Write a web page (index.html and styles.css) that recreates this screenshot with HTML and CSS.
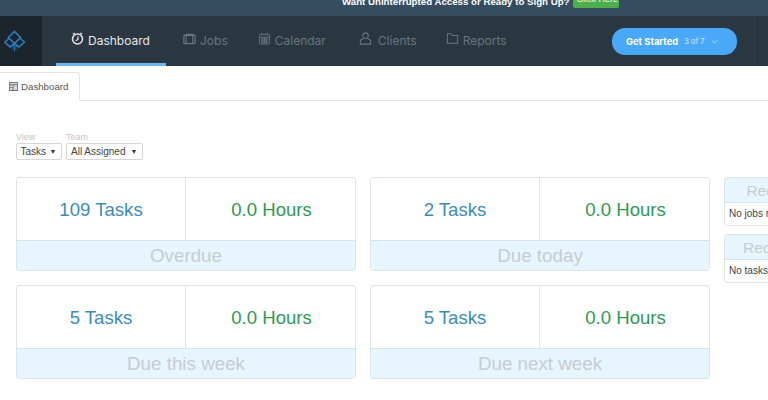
FILE: index.html
```html
<!DOCTYPE html>
<html lang="en">
<head>
<meta charset="utf-8">
<title>Dashboard</title>
<link rel="stylesheet" href="styles.css">
</head>
<body>
<div class="promo">
  <span class="promo-text">Want Uninterrupted Access or Ready to Sign Up?</span>
  <a class="promo-btn">Click Here</a>
</div>
<header class="nav">
  <div class="logo">
    <svg width="22" height="24" viewBox="0 0 22 24" fill="none" stroke="#2e7cbc" stroke-width="1.6">
      <path d="M10.500 2.500 L16.500 8.500 L10.500 14.500 L4.500 8.500 Z"/>
      <path d="M5.500 9 L1 13 L6 18 L10.500 14.500 L15 18 L20.500 13 L15.500 9"/>
      <path d="M9 16.500v4M10.500 15.500v7M12 16.500v4" stroke-width=".8"/>
    </svg>
  </div>
  <nav class="menu">
    <a class="item active">
      <svg class="ico" viewBox="0 0 14 14" fill="none" stroke="currentColor" stroke-width="1.6"><circle cx="7" cy="7.500" r="5.400"/><path d="M4 1 L2 2.500M10 1l2 1.500M7.500 4.500V8L5 9.500" stroke-width="1.3"/></svg>
      Dashboard
    </a>
    <a class="item">
      <svg class="ico" viewBox="0 0 14 14" fill="none" stroke="currentColor" stroke-width="1.4"><rect x="1" y="3.500" width="12" height="9" rx="1"/><path d="M3.500 12.500V2.500h7v10" stroke-width="1.2"/></svg>
      Jobs
    </a>
    <a class="item">
      <svg class="ico" viewBox="0 0 14 14" fill="none" stroke="currentColor" stroke-width="1"><rect x="1.500" y="2.500" width="11" height="10.500" rx="1"/><path d="M4 .8v2.600M10 .8v2.600M1.500 5.500h11M3 7.500h8M3 9.500h8M3 11.500h8M5 6v6M7 6v6M9 6v6"/></svg>
      Calendar
    </a>
    <a class="item">
      <svg class="ico" viewBox="0 0 14 14" fill="none" stroke="currentColor" stroke-width="1.2"><circle cx="7" cy="4" r="3"/><path d="M5 7 L1.500 9v4h11V9L9 7"/></svg>
      Clients
    </a>
    <a class="item">
      <svg class="ico" viewBox="0 0 14 14" fill="none" stroke="currentColor" stroke-width="1.1"><path d="M1.500 2h4l1.500 1.800h5.500v8.200h-11zM7 3.800h5.500"/></svg>
      Reports
    </a>
  </nav>
  <a class="started">
    <b>Get Started</b><span class="count">3 of 7</span>
    <svg class="chev" viewBox="0 0 10 6" fill="none" stroke="#d5eafd" stroke-width="1"><path d="M1 1l4 4 4-4"/></svg>
  </a>
  <div class="nav-end"></div>
</header>
<div class="tabs">
  <div class="tab">
    <svg class="tab-ico" viewBox="0 0 10 10"><rect width="10" height="10" fill="#777"/><path d="M1 1h8v1.500H1zM1 3.500h3v2H1zM1 6.500h3V9H1zM5 3.500h4V9H5z" fill="#d8d8d8"/></svg>
    Dashboard
  </div>
</div>
<main class="content">
  <div class="filters">
    <div class="filter">
      <label>View</label>
      <div class="select sel-view">Tasks<i class="caret"></i></div>
    </div>
    <div class="filter">
      <label>Team</label>
      <div class="select sel-team">All Assigned<i class="caret"></i></div>
    </div>
  </div>
  <div class="board">
    <div class="grid">
      <section class="card">
        <div class="stats"><div class="stat tasks">109 Tasks</div><div class="stat hours">0.0 Hours</div></div>
        <div class="foot">Overdue</div>
      </section>
      <section class="card">
        <div class="stats"><div class="stat tasks">2 Tasks</div><div class="stat hours">0.0 Hours</div></div>
        <div class="foot">Due today</div>
      </section>
      <section class="card">
        <div class="stats"><div class="stat tasks">5 Tasks</div><div class="stat hours">0.0 Hours</div></div>
        <div class="foot">Due this week</div>
      </section>
      <section class="card">
        <div class="stats"><div class="stat tasks">5 Tasks</div><div class="stat hours">0.0 Hours</div></div>
        <div class="foot">Due next week</div>
      </section>
    </div>
    <aside class="side">
      <section class="panel">
        <div class="panel-head">Recent Jobs</div>
        <div class="panel-body">No jobs recently viewed</div>
      </section>
      <section class="panel">
        <div class="panel-head">Recent Tasks</div>
        <div class="panel-body">No tasks recently viewed</div>
      </section>
    </aside>
  </div>
</main>
</body>
</html>
```

FILE: styles.css
```css
* { box-sizing: border-box; }
html, body { height: 400px; overflow: hidden; }
body { margin: 0; background: #fff; font-family: "Liberation Sans", Arial, sans-serif; color: #333; width: 768px; }

.promo { height: 16px; background: #364d5f; display: flex; align-items: flex-end; padding: 0 0 8px 342px; overflow: hidden; }
.promo-text { color: #fff; font-size: 9.700px; font-weight: bold; line-height: 14px; white-space: nowrap; position: relative; top: 1px; }
.promo-btn { flex: none; margin-left: 3px; background: #4cae4c; color: #fff; font-size: 9px; line-height: 14px; padding: 0 4px; height: 16px; border-radius: 2px; width: 46px; white-space: nowrap; }

.nav { height: 49.500px; background: #2b3740; display: flex; align-items: stretch; font-family: "Inter", sans-serif; }
.logo { width: 42px; flex: none; background: #1c252c; display: flex; align-items: center; padding-left: 4px; }
.menu { display: flex; margin-left: 14px; }
.item { display: flex; align-items: center; gap: 4px; padding: 2px 0 0 17px; font-size: 12px; color: #67757f; border-bottom: 3px solid transparent; white-space: nowrap; }
.item:nth-child(3) { padding-left: 30px; }
.item:nth-child(4) { padding-left: 33px; gap: 6px; }
.item:nth-child(5) { padding-left: 29px; }
.item.active { color: #e6e8ea; border-bottom-color: #6cb7f2; width: 110px; padding-left: 15px; }
.ico { width: 13px; height: 13px; flex: none; margin-top: -4px; }
.started { margin: 12px 17px 11px auto; width: 125px; flex: none; background: #4aa8f8; border-radius: 13px; color: #fff; display: flex; align-items: center; padding-left: 14px; }
.started b { font-size: 9.400px; font-weight: 700; }
.count { font-size: 7.500px; color: #d5eafd; margin-left: 6px; }
.chev { width: 7px; height: 5px; margin-left: 6px; }
.nav-end { width: 1px; margin-right: 13px; background: #323f49; flex: none; }

.tabs { height: 35.500px; border-bottom: 1px solid #e6e6e6; display: flex; align-items: flex-end; }
.tab { width: 80px; height: 29px; margin-bottom: -1px; background: #fff; border: 1px solid #e4e4e4; border-bottom-color: #fff; border-left: 0; border-radius: 0 3px 0 0; display: flex; align-items: center; gap: 3px; padding-left: 9px; font-size: 9.700px; color: #555; }
.tab-ico { width: 9px; height: 9px; flex: none; }

.content { padding: 31px 0 0 16px; }
.filters { display: flex; gap: 4px; }
.filter { display: flex; flex-direction: column; }
.filter label { font-size: 9px; line-height: 11px; color: #c4c4c4; }
.select { height: 17px; border: 1px solid #d6d6d6; border-radius: 2px; font-size: 10px; color: #444; display: flex; align-items: center; padding-left: 3.500px; }
.sel-view { width: 46px; }
.sel-team { width: 77px; padding-left: 4px; }
.caret { width: 0; height: 0; border: 2.500px solid transparent; border-top: 4px solid #333; border-bottom: 0; margin-left: auto; margin-right: 6px; }

.board { display: flex; margin-top: 17px; }
.grid { display: grid; grid-template-columns: 340px 340px; gap: 14px 14px; flex: none; }
.card { height: 94px; border: 1.500px solid #dde5ea; border-radius: 3px; display: flex; flex-direction: column; overflow: hidden; }
.stats { flex: 1; display: flex; }
.stat { flex: 1; display: flex; align-items: center; justify-content: center; font-size: 18.600px; padding-top: 2px; }
.tasks { flex: none; width: 169px; color: #3b8db8; border-right: 1.500px solid #dde5ea; }
.hours { color: #2f9a52; padding-left: 2px; }
.foot { height: 30px; background: #e7f6fe; border-top: 1px solid #d5e5ee; color: #c6ccd2; font-size: 18.800px; text-align: center; line-height: 30px; }

.side { margin-left: 14px; display: flex; flex-direction: column; gap: 8px; flex: none; width: 131px; }
.panel { height: 49px; border: 1px solid #dde5ea; border-radius: 3px; overflow: hidden; }
.panel-head { height: 25px; background: #e7f6fe; border-bottom: 1px solid #d5e5ee; color: #c6ccd2; font-size: 15.500px; line-height: 25px; text-align: center; white-space: nowrap; }
.panel-body { font-size: 10px; color: #444; line-height: 22px; padding-left: 4px; white-space: nowrap; }
```
